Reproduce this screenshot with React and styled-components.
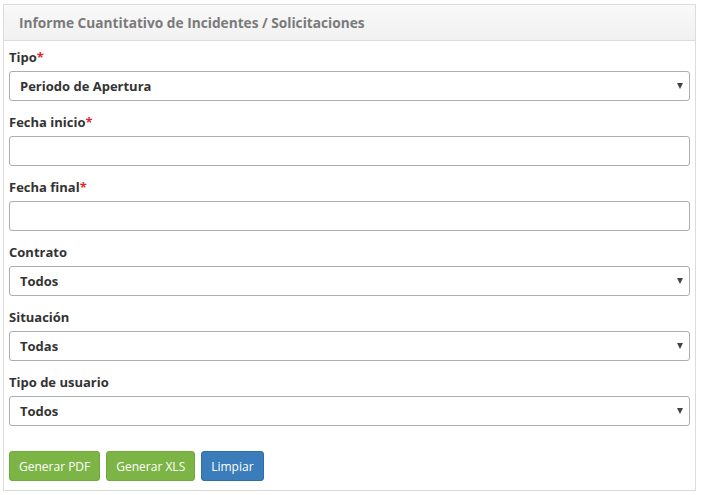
import React from "react";
import styled, { createGlobalStyle } from "styled-components";

const Global = createGlobalStyle`
  html, body { margin: 0; padding: 0; background: #fff; }
  body { font-family: "Open Sans", "Liberation Sans", sans-serif; color: #333; }
  * { box-sizing: border-box; }
`;

const Panel = styled.section`
  margin: 4px 0 0 3px;
  width: 693px;
  height: 487px;
  border: 1px solid #dcdcdc;
  display: flex;
  flex-direction: column;
  background: #fff;
`;

const Header = styled.header`
  height: 36px;
  padding: 0 15px;
  display: flex;
  align-items: center;
  background: linear-gradient(to bottom, #f9f9f9, #f1f1f1);
  border-bottom: 1px solid #dcdcdc;
`;

const Title = styled.h3`
  margin: 0;
  font-size: 13.7px;
  font-weight: 700;
  color: #7a7a7a;
`;

const Body = styled.div`
  padding: 7px 5px 8px 5px;
  display: flex;
  flex-direction: column;
`;

const Group = styled.div`
  display: flex;
  flex-direction: column;
  margin-bottom: ${(p) => (p.$last ? "0" : "12px")};
`;

const Label = styled.label`
  font-size: 13px;
  font-weight: 700;
  line-height: 18px;
  margin-bottom: 5px;
  color: #333;
`;

const Req = styled.span`
  color: #e0262b;
`;

const Field = styled.div`
  position: relative;
  height: 30px;
  border: 1px solid #a9aeb0;
  border-radius: 3px;
  background: #fff;
  display: flex;
  align-items: center;
  padding: 0 10px;
  font-size: 13px;
  font-weight: 700;
  color: #333;
`;

const Arrow = styled.span`
  position: absolute;
  right: 6px;
  top: 50%;
  transform: translateY(-50%);
  width: 0;
  height: 0;
  border-left: 3.5px solid transparent;
  border-right: 3.5px solid transparent;
  border-top: 6px solid #444;
`;

const Actions = styled.div`
  display: flex;
  gap: 6px;
  margin-top: 25px;
`;

const Button = styled.button`
  height: 30px;
  padding: 0 9px;
  border: 1px solid ${(p) => (p.$variant === "primary" ? "#2f6fa8" : "#70a83c")};
  border-radius: 3px;
  background: ${(p) => (p.$variant === "primary" ? "#3a7dba" : "#7cb446")};
  color: #fff;
  font-family: "Open Sans", "Liberation Sans", sans-serif;
  font-size: 12px;
  font-weight: 400;
  cursor: pointer;
`;

const fields = [
  { label: "Tipo", req: true, select: true, value: "Periodo de Apertura" },
  { label: "Fecha inicio", req: true },
  { label: "Fecha final", req: true },
  { label: "Contrato", select: true, value: "Todos" },
  { label: "Situación", select: true, value: "Todas" },
  { label: "Tipo de usuario", select: true, value: "Todos" },
];

export default function App() {
  return (
    <>
      <Global />
      <Panel>
        <Header>
          <Title>Informe Cuantitativo de Incidentes / Solicitaciones</Title>
        </Header>
        <Body>
          {fields.map((f, i) => (
            <Group key={f.label} $last={i === fields.length - 1}>
              <Label>
                {f.label}
                {f.req && <Req>*</Req>}
              </Label>
              <Field>
                {f.value}
                {f.select && <Arrow />}
              </Field>
            </Group>
          ))}
          <Actions>
            <Button>Generar PDF</Button>
            <Button>Generar XLS</Button>
            <Button $variant="primary">Limpiar</Button>
          </Actions>
        </Body>
      </Panel>
    </>
  );
}
